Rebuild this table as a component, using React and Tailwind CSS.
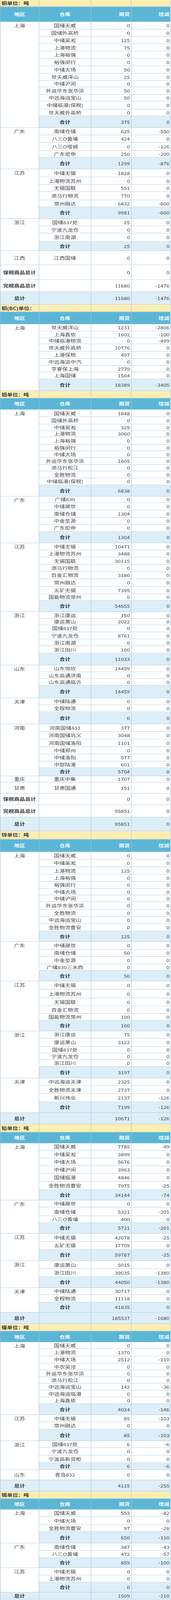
import React from 'react'

// row heights, px (each includes the row's bottom border)
const H = {
  21: 'h-[21px]', 22: 'h-[22px]', 23: 'h-[23px]', 24: 'h-[24px]', 25: 'h-[25px]',
  26: 'h-[26px]', 27: 'h-[27px]', 28: 'h-[28px]', 29: 'h-[29px]', 30: 'h-[30px]',
  31: 'h-[31px]', 32: 'h-[32px]', 33: 'h-[33px]', 34: 'h-[34px]', 35: 'h-[35px]',
  36: 'h-[36px]', 37: 'h-[37px]', 38: 'h-[38px]', 39: 'h-[39px]', 40: 'h-[40px]',
  41: 'h-[41px]', 42: 'h-[42px]', 43: 'h-[43px]', 44: 'h-[44px]', 45: 'h-[45px]',
  46: 'h-[46px]', 47: 'h-[47px]', 48: 'h-[48px]', 49: 'h-[49px]',
}

const sections = [
  {
    title: '铜单位：吨', th: 22, hh: 49,
    groups: [
      {
        region: '上海',
        rows: [
          ['国储天威', '0', '0', 25], ['国储外高桥', '0', '0', 23], ['中储吴淞', '125', '0', 24],
          ['上港物流', '75', '0', 24], ['上海裕强', '0', '0', 24], ['裕强闵行', '0', '0', 24],
          ['中储大场', '50', '0', 24], ['世天威洋山', '25', '0', 24], ['中储沪闵', '0', '0', 21],
          ['外运华东张华浜', '50', '0', 24], ['中远海运宝山', '50', '0', 22], ['中储临港(保税)', '0', '0', 26],
          ['世天威外高桥', '0', '0', 22],
        ],
        total: ['375', '0', 38],
      },
      {
        region: '广东',
        rows: [
          ['南储仓储', '625', '-550', 24], ['八三O黄埔', '424', '0', 24],
          ['八三O增城', '0', '-126', 27], ['广东炬申', '250', '-200', 22],
        ],
        total: ['1299', '-876', 38],
      },
      {
        region: '江苏',
        rows: [
          ['中储无锡', '1828', '0', 26], ['上港物流苏州', '0', '0', 24], ['无锡国联', '551', '0', 24],
          ['添马行物流', '770', '0', 27], ['常州融达', '6832', '-600', 22],
        ],
        total: ['9981', '-600', 38],
      },
      {
        region: '浙江',
        rows: [['国储837处', '25', '0', 24], ['宁波九龙仓', '0', '0', 24], ['浙江南湖', '0', '0', 27]],
        total: ['25', '0', 30],
      },
      { region: '江西', rows: [['江西国储', '0', '0', 46]] },
    ],
    tail: [
      ['保税商品总计', '0', '0', 48, false],
      ['完税商品总计', '11680', '-1476', 39, false],
      ['总计', '11680', '-1476', 42, true],
    ],
  },
  {
    title: '铜(BC)单位：', th: 24, hh: 40,
    groups: [
      {
        region: '上海',
        rows: [
          ['世天威洋山', '1231', '-2806', 23], ['上海鑫依', '1602', '-100', 21], ['中储临港物流', '0', '-499', 21],
          ['世天威外高桥', '10776', '0', 24], ['上港保税', '497', '0', 23], ['中远海运中汽', '0', '0', 23],
          ['亨睿保上海', '2779', '0', 21], ['上海国储', '1504', '0', 23],
        ],
        total: ['18389', '-3405', 38],
      },
    ],
    tail: [],
  },
  {
    title: '铝单位：吨', th: 24, hh: 37,
    groups: [
      {
        region: '上海',
        rows: [
          ['国储天威', '1848', '0', 24], ['国储外高桥', '0', '0', 24], ['中储吴淞', '325', '0', 21],
          ['上港物流', '3060', '0', 21], ['上海裕强', '0', '0', 24], ['裕强闵行', '0', '0', 21],
          ['中储大场', '0', '0', 22], ['外运华东张华浜', '1605', '0', 23], ['添马行松江', '0', '0', 21],
          ['全胜物流', '0', '0', 22], ['中储临港(保税)', '0', '0', 23],
        ],
        total: ['6838', '0', 37],
      },
      {
        region: '广东',
        rows: [
          ['广储830', '0', '0', 21], ['中储晟世', '0', '0', 24], ['南储仓储', '1304', '0', 24],
          ['中金圣源', '0', '0', 23], ['广东炬申', '0', '0', 23],
        ],
        total: ['1304', '0', 37],
      },
      {
        region: '江苏',
        rows: [
          ['中储无锡', '10471', '0', 23], ['上港物流苏州', '3488', '0', 23], ['无锡国联', '30115', '0', 24],
          ['添马行物流', '0', '0', 24], ['百金汇物流', '3186', '0', 23], ['常州融达', '0', '0', 25],
          ['五矿无锡', '7395', '0', 24], ['国能物流常州', '0', '0', 21],
        ],
        total: ['54655', '0', 37],
      },
      {
        region: '浙江',
        rows: [
          ['浙江康运', '150', '0', 22], ['康运萧山', '2022', '0', 21], ['国储837处', '0', '0', 23],
          ['宁波九龙仓', '8761', '0', 23], ['浙江南湖', '0', '0', 22], ['浙江田川', '100', '0', 24],
        ],
        total: ['11033', '0', 39],
      },
      {
        region: '山东',
        rows: [['山东恒欣', '14459', '0', 22], ['山东高通济南', '0', '0', 22], ['山东高通临沂', '0', '0', 22]],
        total: ['14459', '0', 41],
      },
      {
        region: '天津',
        rows: [['中储陆通', '0', '0', 22], ['全程物流', '0', '0', 23]],
        total: ['0', '0', 40],
      },
      {
        region: '河南',
        rows: [
          ['河南国储431', '377', '0', 24], ['河南国储巩义', '3048', '0', 25], ['河南国储洛阳', '1101', '0', 25],
          ['中储郑州', '0', '0', 24], ['中储洛阳', '577', '0', 23], ['中部陆港', '601', '0', 21],
        ],
        total: ['5704', '0', 27],
      },
      { region: '重庆', rows: [['重庆中集', '1707', '0', 21]] },
      { region: '甘肃', rows: [['甘肃国通', '151', '0', 36]] },
    ],
    tail: [
      ['保税商品总计', '0', '0', 37, false],
      ['完税商品总计', '95851', '0', 40, false],
      ['总计', '95851', '0', 45, true],
    ],
  },
  {
    title: '锌单位：吨', th: 27, hh: 41,
    groups: [
      {
        region: '上海',
        rows: [
          ['国储天威', '0', '0', 24], ['中储吴淞', '0', '0', 25], ['上港物流', '125', '0', 24],
          ['上海裕强', '0', '0', 24], ['裕强闵行', '0', '0', 23], ['中储大场', '0', '0', 21],
          ['中储沪闵', '0', '0', 22], ['外运华东张华浜', '0', '0', 25], ['全胜物流', '0', '0', 23],
          ['中远海运宝山', '0', '0', 23], ['全胜物流曹安', '0', '0', 24],
        ],
        total: ['125', '0', 35],
      },
      {
        region: '广东',
        rows: [
          ['中储晟世', '0', '0', 25], ['南储仓储', '50', '0', 23], ['中金圣源', '0', '0', 25],
          ['广储830三水西', '0', '0', 21],
        ],
        total: ['50', '0', 34],
      },
      {
        region: '江苏',
        rows: [
          ['中储无锡', '0', '0', 27], ['上港物流苏州', '0', '0', 28], ['无锡国联', '0', '0', 26],
          ['百金汇物流', '0', '0', 25], ['国能物流常州', '100', '0', 22],
        ],
        total: ['100', '0', 35],
      },
      {
        region: '浙江',
        rows: [
          ['浙江康运', '75', '0', 23], ['康运萧山', '3122', '0', 27], ['国储837处', '0', '0', 22],
          ['宁波九龙仓', '0', '0', 21], ['浙江田川', '0', '0', 23],
        ],
        total: ['3197', '0', 37],
      },
      {
        region: '天津',
        rows: [['中远海运天津', '2325', '0', 25], ['全胜物流天津', '2737', '0', 26], ['新兴伟业', '2137', '-126', 26]],
        total: ['7199', '-126', 36],
      },
    ],
    tail: [['总计', '10671', '-126', 37, true]],
  },
  {
    title: '铅单位：吨', th: 26, hh: 36,
    groups: [
      {
        region: '上海',
        rows: [
          ['国储天威', '7785', '-49', 23], ['中储吴淞', '3899', '0', 26], ['中储大场', '5676', '0', 25],
          ['中储沪闵', '3963', '0', 25], ['国储临港', '4846', '0', 26], ['全胜物流曹安', '7975', '-25', 27],
        ],
        total: ['34144', '-74', 34],
      },
      {
        region: '广东',
        rows: [['中储晟世', '0', '0', 23], ['南储仓储', '5321', '-201', 28], ['八三O黄埔', '400', '0', 22]],
        total: ['5721', '-201', 35],
      },
      {
        region: '江苏',
        rows: [['中储无锡', '42078', '-25', 27], ['五矿无锡', '17709', '0', 25]],
        total: ['59787', '-25', 37],
      },
      {
        region: '浙江',
        rows: [['康运萧山', '5015', '0', 26], ['浙江田川', '39035', '-1380', 26]],
        total: ['44050', '-1380', 36],
      },
      {
        region: '天津',
        rows: [['中储陆通', '30717', '0', 23], ['全程物流', '11118', '0', 24]],
        total: ['41835', '0', 33],
      },
    ],
    tail: [['总计', '185537', '-1680', 37, true]],
  },
  {
    title: '镍单位：吨', th: 24, hh: 36,
    groups: [
      {
        region: '上海',
        rows: [
          ['国储天威', '0', '0', 21], ['上港物流', '1370', '0', 25], ['中储大场', '2512', '-110', 23],
          ['中农吴泾', '0', '0', 22], ['外运华东张华浜', '0', '0', 22], ['添马行松江', '0', '0', 22],
          ['中远海运宝山', '142', '-36', 22], ['中远海运临港', '0', '0', 22], ['上海鑫依', '0', '0', 22],
        ],
        total: ['4024', '-146', 36],
      },
      {
        region: '江苏',
        rows: [['中储无锡', '85', '-103', 23], ['常州融达', '0', '0', 24]],
        total: ['85', '-103', 38],
      },
      {
        region: '浙江',
        rows: [['国储837处', '6', '-6', 22], ['宁波九龙仓', '0', '0', 25], ['宁波高新货柜', '0', '0', 24]],
        total: ['6', '-6', 23],
      },
      { region: '山东', rows: [['青岛832', '0', '0', 33]] },
    ],
    tail: [['总计', '4115', '-255', 37, true]],
  },
  {
    title: '锡单位：吨', th: 24, hh: 35,
    groups: [
      {
        region: '上海',
        rows: [['国储天威', '553', '-82', 24], ['中储大场', '0', '0', 26], ['全胜物流曹安', '97', '-28', 22]],
        total: ['650', '-110', 38],
      },
      {
        region: '广东',
        rows: [['南储仓储', '387', '-43', 24], ['八三O黄埔', '472', '-57', 23]],
        total: ['859', '-100', 33],
      },
      {
        region: '江苏',
        rows: [['中储无锡', '0', '0', 24], ['上港物流苏州', '0', '0', 23]],
        total: ['0', '0', 33],
      },
    ],
    tail: [['总计', '1509', '-210', 23, true]],
  },
]

const line = 'border-r border-b border-[#a6c4de]'
const c1 = `w-[99px] shrink-0 ${line}`
const c2 = `w-[133px] shrink-0 ${line} flex items-center justify-center whitespace-nowrap overflow-hidden`
const c3 = `w-[103px] shrink-0 ${line} flex items-center justify-end pr-[3px] whitespace-nowrap`
const c4 = `w-[100px] shrink-0 ${line} flex items-center justify-end pr-[2px] whitespace-nowrap`

function Group({ g }) {
  const multi = g.rows.length + (g.total ? 1 : 0) > 1
  return (
    <div className="flex">
      <div className={multi ? `${c1} text-center leading-[24px]` : `${c1} flex items-center justify-center`}>
        {g.region}
      </div>
      <div className="flex flex-col">
        {g.rows.map((r, i) => (
          <div key={i} className={`${H[r[3]]} flex`}>
            <div className={c2}>{r[0]}</div>
            <div className={c3}>{r[1]}</div>
            <div className={c4}>{r[2]}</div>
          </div>
        ))}
        {g.total && (
          <div className={`${H[g.total[2]]} flex bg-[#ddeef8]`}>
            <div className={`${c2} font-bold text-[#333]`}>合计</div>
            <div className={c3}>{g.total[0]}</div>
            <div className={c4}>{g.total[1]}</div>
          </div>
        )}
      </div>
    </div>
  )
}

function Section({ s }) {
  return (
    <>
      <div className={`${H[s.th]} flex bg-[#fdeeb1]`}>
        <div className={`${c1} flex items-center pl-[3px] font-bold text-[#333] whitespace-nowrap`}>{s.title}</div>
        <div className={c2}></div>
        <div className={c3}></div>
        <div className={c4}></div>
      </div>
      <div className={`${H[s.hh]} flex bg-[#5bb6d6] text-white font-bold`}>
        <div className={`${c1} flex items-center justify-center`}>地区</div>
        <div className={c2}>仓库</div>
        <div className={`${c3} justify-center pr-0`}>期货</div>
        <div className={`${c4} justify-center pr-0`}>增减</div>
      </div>
      {s.groups.map((g, i) => <Group key={i} g={g} />)}
      {s.tail.map((t, i) => (
        <div key={'t' + i} className={t[4] ? `${H[t[3]]} flex bg-[#ddeef8]` : `${H[t[3]]} flex bg-white`}>
          <div className={`${c1} flex items-center justify-center font-bold text-[#333] whitespace-nowrap`}>{t[0]}</div>
          <div className={c2}></div>
          <div className={c3}>{t[1]}</div>
          <div className={c4}>{t[2]}</div>
        </div>
      ))}
    </>
  )
}

export default function App() {
  // the photographed window is only 4096px tall, so the 5212px sheet is squeezed to fit it
  return (
    <div className="bg-white w-[437px] h-[4096px] overflow-hidden font-['Noto_Sans_CJK_SC','Noto_Sans',sans-serif] text-[14px] leading-[20px] text-[#3d3d3d]">
      <div className="w-[436px] border-l border-[#95b8d6] origin-top scale-y-[0.7859]">
        {sections.map((s, i) => <Section key={i} s={s} />)}
      </div>
    </div>
  )
}
